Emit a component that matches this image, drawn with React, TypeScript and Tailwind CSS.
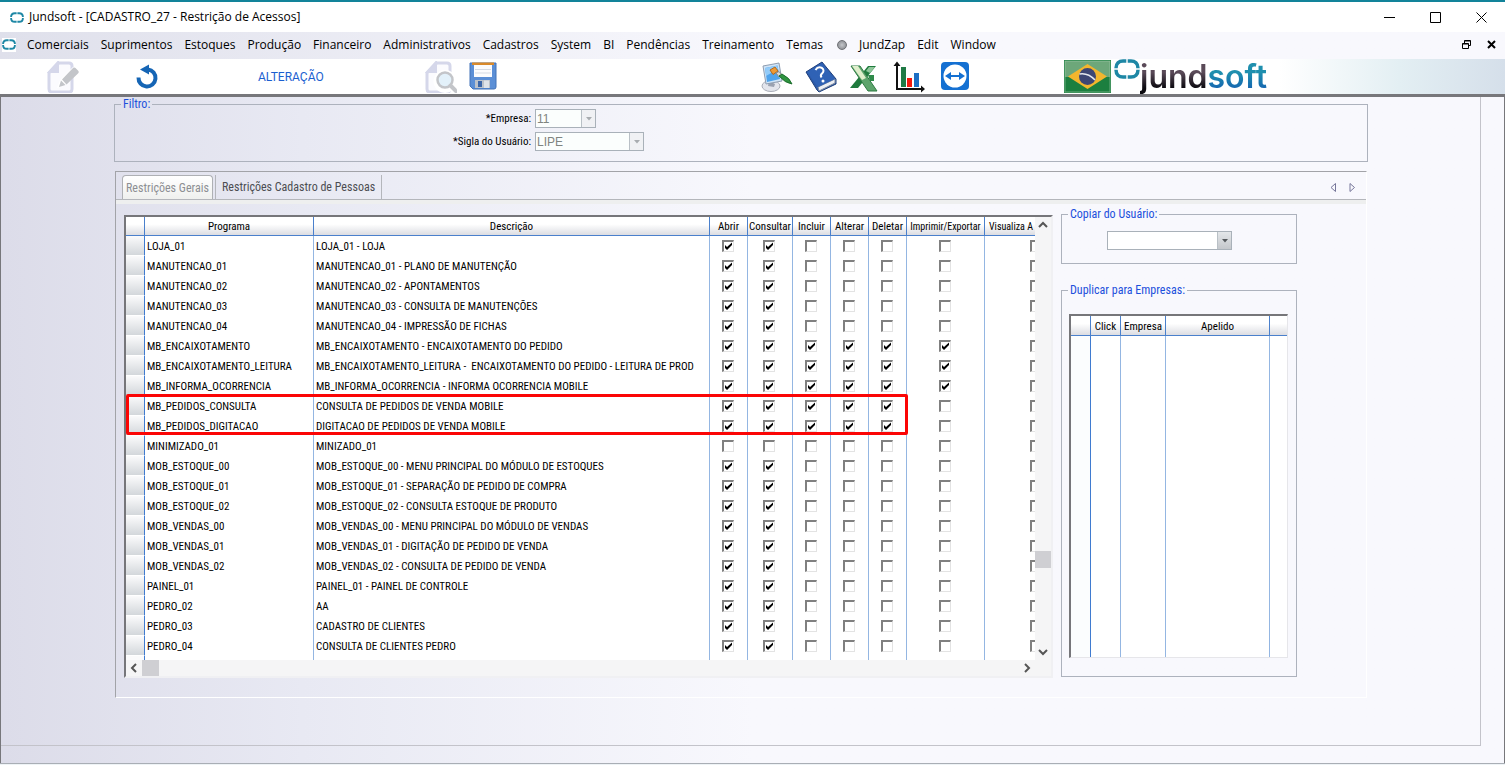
import clsx from 'clsx';
import React from 'react';

interface IProgramRow {
  program: string;
  description: string;
  checked: number;
}

const MENU_ITEMS = [
  'Comerciais', 'Suprimentos', 'Estoques', 'Produção', 'Financeiro', 'Administrativos',
  'Cadastros', 'System', 'BI', 'Pendências', 'Treinamento', 'Temas',
];

const PERMISSIONS = ['Abrir', 'Consultar', 'Incluir', 'Alterar', 'Deletar', 'Imprimir/Exportar', 'Visualiza A'];

// checked = how many permissions are on, counted from the left
const ROWS: IProgramRow[] = [
  { program: 'LOJA_01', description: 'LOJA_01 - LOJA', checked: 2 },
  { program: 'MANUTENCAO_01', description: 'MANUTENCAO_01 - PLANO DE MANUTENÇÃO', checked: 2 },
  { program: 'MANUTENCAO_02', description: 'MANUTENCAO_02 - APONTAMENTOS', checked: 2 },
  { program: 'MANUTENCAO_03', description: 'MANUTENCAO_03 - CONSULTA DE MANUTENÇÕES', checked: 2 },
  { program: 'MANUTENCAO_04', description: 'MANUTENCAO_04 - IMPRESSÃO DE FICHAS', checked: 2 },
  { program: 'MB_ENCAIXOTAMENTO', description: 'MB_ENCAIXOTAMENTO - ENCAIXOTAMENTO DO PEDIDO', checked: 6 },
  { program: 'MB_ENCAIXOTAMENTO_LEITURA', description: 'MB_ENCAIXOTAMENTO_LEITURA -  ENCAIXOTAMENTO DO PEDIDO - LEITURA DE PROD', checked: 6 },
  { program: 'MB_INFORMA_OCORRENCIA', description: 'MB_INFORMA_OCORRENCIA - INFORMA OCORRENCIA MOBILE', checked: 6 },
  { program: 'MB_PEDIDOS_CONSULTA', description: 'CONSULTA DE PEDIDOS DE VENDA MOBILE', checked: 5 },
  { program: 'MB_PEDIDOS_DIGITACAO', description: 'DIGITACAO DE PEDIDOS DE VENDA MOBILE', checked: 5 },
  { program: 'MINIMIZADO_01', description: 'MINIZADO_01', checked: 0 },
  { program: 'MOB_ESTOQUE_00', description: 'MOB_ESTOQUE_00 - MENU PRINCIPAL DO MÓDULO DE ESTOQUES', checked: 2 },
  { program: 'MOB_ESTOQUE_01', description: 'MOB_ESTOQUE_01 - SEPARAÇÃO DE PEDIDO DE COMPRA', checked: 2 },
  { program: 'MOB_ESTOQUE_02', description: 'MOB_ESTOQUE_02 - CONSULTA ESTOQUE DE PRODUTO', checked: 2 },
  { program: 'MOB_VENDAS_00', description: 'MOB_VENDAS_00 - MENU PRINCIPAL DO MÓDULO DE VENDAS', checked: 2 },
  { program: 'MOB_VENDAS_01', description: 'MOB_VENDAS_01 - DIGITAÇÃO DE PEDIDO DE VENDA', checked: 2 },
  { program: 'MOB_VENDAS_02', description: 'MOB_VENDAS_02 - CONSULTA DE PEDIDO DE VENDA', checked: 2 },
  { program: 'PAINEL_01', description: 'PAINEL_01 - PAINEL DE CONTROLE', checked: 2 },
  { program: 'PEDRO_02', description: 'AA', checked: 2 },
  { program: 'PEDRO_03', description: 'CADASTRO DE CLIENTES', checked: 2 },
  { program: 'PEDRO_04', description: 'CONSULTA DE CLIENTES PEDRO', checked: 2 },
];

function BrandMark({ className }: { className?: string }) {
  return (
    <svg viewBox="0 0 26 20" className={className} fill="none" stroke="#1e87a5" strokeWidth="3.500" aria-hidden="true">
      <path d="M12.300 2H9C5 2 2 4.500 2 9.300M13.700 2H17C21 2 24 4.500 24 9.300M2 10.700C2 15.500 5 18 9 18H12.300M24 10.700C24 15.500 21 18 17 18H13.700" />
    </svg>
  );
}

function PageOutline({ children }: { children: React.ReactNode }) {
  return (
    <svg viewBox="0 0 32 32" className="size-8" fill="none" aria-hidden="true">
      <path d="M12 2H22Q25 2 25 5V28Q25 31 22 31H5Q2 31 2 28V12Z" fill="#fbfbfe" stroke="#d5d7ea" strokeWidth="3" />
      <path d="M2 11L11 1V11Z" fill="#d5d7ea" stroke="#d5d7ea" strokeWidth="2" />
      {children}
    </svg>
  );
}

function EditIcon() {
  return (
    <PageOutline>
      <path d="M10 27L13 19L26 6L32 11L18 24Z" fill="#fff" />
      <path d="M12 26L14 19.500L18.500 24Z M15 18.500L25.500 7.500Q27 6 28.500 7L31 9.500Q32.500 11 31 12.500L19.500 23.500Z" fill="#c3c5c9" />
    </PageOutline>
  );
}

function SearchPageIcon() {
  return (
    <PageOutline>
      <path d="M20 12a8.500 8.500 0 1 0 .1 0ZM25 24L31 30" fill="#fff" stroke="#fff" strokeWidth="6" />
      <circle cx="20" cy="19" r="7.500" fill="#e3f1fa" stroke="#c3c5c9" strokeWidth="2.500" />
      <path d="M25.500 24.500L31 30" stroke="#c3c5c9" strokeWidth="4" strokeLinecap="round" />
    </PageOutline>
  );
}

function UndoIcon() {
  return (
    <svg viewBox="0 0 28 32" className="h-8 w-7" aria-hidden="true">
      <path d="M5.500 16.500A8.500 8.500 0 1 0 15 8.500" fill="none" stroke="#1565b5" strokeWidth="4" />
      <path d="M7 8.500L16 3.500V13.500Z" fill="#1565b5" />
    </svg>
  );
}

function SaveIcon() {
  return (
    <svg viewBox="0 0 28 32" className="h-8 w-7" aria-hidden="true">
      <path d="M1 2H27V26Q27 28 25 28H4L1 25Z" fill="#5b8fd6" stroke="#4272b8" />
      <path d="M5 3H23V16H5Z" fill="#fbfcfe" />
      <path d="M3 1.500H25V4H3Z" fill="#d98a2b" />
      <path d="M6 8.500H22M6 12H22" stroke="#d5dbe4" />
      <path d="M6 19H21V27H6Z" fill="#bcc2ca" />
      <path d="M9 20H13V26H9Z" fill="#3b66a8" />
      <path d="M15 19.500H20V27H15Z" fill="#dfe3e8" />
    </svg>
  );
}

function PaintIcon() {
  return (
    <svg viewBox="0 0 32 32" className="size-8" aria-hidden="true">
      <ellipse cx="10" cy="25" rx="9" ry="5.500" fill="#e3e5ec" stroke="#a9adb8" />
      <path d="M8 20L14 23L13 26L7 25Z" fill="#9aa1b0" />
      <path d="M2 5L18 2L21 20L5 23Z" fill="#cfe4f7" stroke="#8f9db0" />
      <path d="M4 7L16.500 4.500L19 18L6 21Z" fill="#4fa3ec" />
      <path d="M4 7L16.500 4.500L17 8L5 15Z" fill="#93cbf8" />
      <path d="M9 9L14 6L17 10L12 13.500Z" fill="#ee9a35" stroke="#b36a1c" />
      <path d="M15 12L18 10.500L21 14L18 16Z" fill="#d9d9d9" stroke="#8a8a8a" />
      <path d="M18 15L21 13Q29 17 31 23Q24 22 18 15Z" fill="#2f9440" stroke="#1d6e2d" />
    </svg>
  );
}

function HelpBookIcon() {
  return (
    <svg viewBox="0 0 32 32" className="size-8" aria-hidden="true">
      <path d="M1 11L17 1L31 18L31 23L14 31L12 29Z" fill="#2c5aa8" stroke="#1e3f7c" />
      <path d="M13 26L30 18V22L14 30Z" fill="#edf0f5" stroke="#7f8ba0" />
      <path d="M2 11L17 2L30 18L13 26Z" fill="#2f62b5" />
      <path d="M10.500 9Q13 5 17 7Q20 9.500 17 12.500Q15 14 16.500 16.500" fill="none" stroke="#fff" strokeWidth="2" />
      <circle cx="18" cy="20" r="1.500" fill="#fff" />
    </svg>
  );
}

function SpreadsheetIcon() {
  return (
    <svg viewBox="0 0 32 32" className="size-8" aria-hidden="true">
      <path d="M19 5H27L9 27H1Z" fill="#1f7a3d" />
      <path d="M20 6H26L21 12L17 10Z" fill="#8fc79a" />
      <path d="M19 14H25V20H21Z" fill="#2f8a4a" />
      <path d="M2 5H11L28 30H19Z" fill="#5da46c" stroke="#2d7a42" />
      <path d="M3 5H9L17 17L13 19Z" fill="#dfeecb" />
    </svg>
  );
}

function ChartIcon() {
  return (
    <svg viewBox="0 0 32 32" className="size-8" aria-hidden="true">
      <path d="M4 3V28H30" fill="none" stroke="#111" strokeWidth="2" />
      <path d="M0.500 5L4 0.500L7.500 5ZM28 24.500L32 28L28 31.500Z" fill="#111" />
      <path d="M8 6H13V26H8Z" fill="#1f7a45" />
      <path d="M14 17H19V26H14Z" fill="#f3190d" />
      <path d="M21 12H26V26H21Z" fill="#1c6fc4" />
    </svg>
  );
}

function RemoteIcon() {
  return (
    <svg viewBox="0 0 32 32" className="size-8" aria-hidden="true">
      <rect x="4" y="1" width="28" height="28" rx="4" fill="#1470d2" />
      <circle cx="18" cy="15" r="11.500" fill="#fff" />
      <path d="M8 15L14 11V14H22V11L28 15L22 19V16H14V19Z" fill="#1470d2" />
    </svg>
  );
}

function FlagIcon() {
  return (
    <svg viewBox="0 0 47 33" className="h-[33px] w-[47px]" aria-hidden="true">
      <rect width="47" height="33" fill="#1c7f3f" />
      <rect x="1" y="1" width="45" height="16" fill="#6da77a" />
      <rect x="1" y="1" width="45" height="31" fill="none" stroke="#b6d3bb" strokeOpacity="0.500" />
      <path d="M4 16.500L23.500 4L43 16.500L23.500 29Z" fill="#f2b62e" />
      <circle cx="23.500" cy="16.500" r="8.500" fill="#3d4674" />
      <path d="M15.500 14Q24 12.500 31 20" fill="none" stroke="#e5e8ef" strokeWidth="1.500" />
    </svg>
  );
}

function ToolButton({ label, children }: { label: string; children: React.ReactNode }) {
  return (
    <button type="button" aria-label={label} className="shrink-0">
      {children}
    </button>
  );
}

function CheckCell({ label, on }: { label: string; on: boolean }) {
  return (
    <span className="mx-auto grid size-3 place-items-center">
      <input
        type="checkbox"
        aria-label={label}
        defaultChecked={on}
        className="col-start-1 row-start-1 size-3 appearance-none border-t-2 border-r border-b border-l-2 border-t-[#808080] border-r-[#e3e3e3] border-b-[#e3e3e3] border-l-[#808080] bg-white"
      />
      {on && (
        <svg viewBox="0 0 12 12" className="pointer-events-none col-start-1 row-start-1 size-3" aria-hidden="true">
          <path d="M3 5V8L5 10L10 5V2.500L5 7Z" fill="#000" />
        </svg>
      )}
    </span>
  );
}

function SelectBox({ label, value, className, disabled }: { label: string; value?: string; className?: string; disabled?: boolean }) {
  return (
    <span className={clsx('grid h-[19px] border border-[#a9b1b9]', disabled ? 'bg-[#fbfefd]' : 'bg-white', className)}>
      <select
        id={label}
        aria-label={label}
        disabled={disabled}
        className="col-start-1 row-start-1 h-[17px] w-full appearance-none px-px font-['Liberation_Sans'] text-xs leading-4 text-[#7f8480] opacity-100"
      >
        <option>{value ?? ''}</option>
      </select>
      <span
        className={clsx(
          'pointer-events-none col-start-1 row-start-1 flex h-[17px] w-3.5 items-center justify-center justify-self-end border-l border-[#b9c0c6]',
          disabled ? 'bg-[#f0f1f4] text-[#a8acb0]' : 'bg-linear-to-b from-[#e4e7ea] to-[#c4c7cb] text-[#55595d]',
        )}
      >
        <svg viewBox="0 0 6 4" className="h-1 w-1.5" aria-hidden="true"><path d="M0 0H6L3 3.500Z" fill="currentColor" /></svg>
      </span>
    </span>
  );
}

function Chevron({ d, label }: { d: string; label: string }) {
  return (
    <button type="button" aria-label={label} className="flex size-4 items-center justify-center">
      <svg viewBox="0 0 10 10" className="size-2.5" fill="none" stroke="#555" strokeWidth="2" aria-hidden="true"><path d={d} /></svg>
    </button>
  );
}

function Group({ title, className, children }: { title: string; className?: string; children: React.ReactNode }) {
  return (
    <fieldset className={clsx('min-w-0 border border-[#adb2bd]', className)}>
      <legend className="ml-1.5 px-0.5 text-xs leading-[10px] text-[#1c50dc]">{title}</legend>
      {children}
    </fieldset>
  );
}

const headCell = 'border-r border-b border-[#4a80cc] bg-linear-to-b from-white from-40% to-[#dcdde2] p-0 pt-0.5 text-center font-normal whitespace-nowrap';

function PermissionsGrid() {
  return (
    <div className="mt-1.5 min-w-0 flex-1 border-2 border-t-[#76767a] border-r-[#f0f0f3] border-b-[#f0f0f3] border-l-[#76767a] bg-white">
      <div className="flex">
        <div className="relative h-[443px] min-w-0 flex-1 overflow-hidden">
          <table className="w-[963px] table-fixed border-separate border-spacing-0 text-[11px] leading-[14px]">
            <colgroup>
              <col className="w-[19px]" />
              <col className="w-[169px]" />
              <col className="w-[396px]" />
              <col className="w-[38px]" />
              <col className="w-[45px]" />
              <col className="w-[38px]" />
              <col className="w-[38px]" />
              <col className="w-[38px]" />
              <col className="w-[78px]" />
              <col className="w-[104px]" />
            </colgroup>
            <thead>
              <tr className="h-[19px]">
                <th className={headCell} aria-label="Linha" />
                <th className={headCell}>Programa</th>
                <th className={headCell}>Descrição</th>
                {PERMISSIONS.map((p, i) => (
                  <th key={p} className={clsx(headCell, i >= 5 && 'text-[10px]', i === 6 && 'pl-1 text-left')}>{p}</th>
                ))}
              </tr>
            </thead>
            <tbody>
              {ROWS.map((row) => (
                <tr key={row.program} className="h-5">
                  <td className="border-r border-b border-r-[#3f7bd0] border-b-white bg-linear-to-b from-[#fbfbfc] to-[#d3d7db] p-0" />
                  <td className="truncate border-r border-[#94b6e2] p-0 pt-0.5 pl-0.5">{row.program}</td>
                  <td className="overflow-hidden border-r border-[#94b6e2] p-0 pt-0.5 pl-0.5 whitespace-pre">{row.description}</td>
                  {PERMISSIONS.map((p, i) => (
                    <td key={p} className="border-r border-[#94b6e2] p-0 pr-0.5">
                      <CheckCell label={`${p} ${row.program}`} on={i < row.checked} />
                    </td>
                  ))}
                </tr>
              ))}
              <tr className="h-5">
                <td className="border-r border-[#3f7bd0] bg-[#fbfbfc] p-0" />
                <td className="border-r border-[#94b6e2] p-0" />
                <td className="border-r border-[#94b6e2] p-0" />
                {PERMISSIONS.map((p) => <td key={p} className="border-r border-[#94b6e2] p-0" />)}
              </tr>
            </tbody>
          </table>
          <div className="pointer-events-none absolute top-[177px] left-0 h-[41px] w-[782px] rounded-xs border-3 border-[#fb0505]" />
        </div>
        <div className="flex w-4 flex-col items-center justify-between bg-[#f5f5f6]">
          <Chevron d="M1 7L5 3L9 7" label="Rolar para cima" />
          <div className="flex flex-1 flex-col justify-end pb-[76px]">
            <div className="h-[17px] w-4 bg-[#cfcfd3]" />
          </div>
          <Chevron d="M1 3L5 7L9 3" label="Rolar para baixo" />
        </div>
      </div>
      <div className="flex h-4 items-center bg-[#f5f5f6] pr-4">
        <Chevron d="M7 1L3 5L7 9" label="Rolar para esquerda" />
        <div className="h-4 w-[17px] bg-[#cfcfd3]" />
        <div className="flex-1" />
        <Chevron d="M3 1L7 5L3 9" label="Rolar para direita" />
      </div>
    </div>
  );
}

function CompaniesGrid() {
  const cell = 'border-r border-[#94b6e2] p-0';
  return (
    <div className="border-t-2 border-r border-b border-l-2 border-t-[#76767a] border-r-[#e6e6ea] border-b-[#e6e6ea] border-l-[#76767a] bg-white">
      <table className="w-full table-fixed border-separate border-spacing-0 text-[11px] leading-[14px]">
        <colgroup>
          <col className="w-5" />
          <col className="w-[30px]" />
          <col className="w-[45px]" />
          <col className="w-[104px]" />
          <col />
        </colgroup>
        <thead>
          <tr className="h-5">
            <th className={headCell} aria-label="Linha" />
            <th className={headCell}>Click</th>
            <th className={headCell}>Empresa</th>
            <th className={headCell}>Apelido</th>
            <th className={clsx(headCell, 'border-r-0')} aria-label="Extra" />
          </tr>
        </thead>
        <tbody>
          <tr className="h-[321px]">
            <td className="border-r border-[#3f7bd0] bg-[#fbfdfe] p-0" />
            <td className={cell} />
            <td className={cell} />
            <td className={cell} />
            <td className="p-0" />
          </tr>
        </tbody>
      </table>
    </div>
  );
}

export default function App() {
  return (
    <div className="flex min-h-screen flex-col bg-white font-['Roboto_Condensed','Liberation_Sans',sans-serif] text-black">
      <div className="h-0.5 bg-[#12839a]" />

      <header className="font-['Open_Sans','Noto_Sans',sans-serif] text-xs">
        <div className="flex h-[30px] items-center pl-2.5">
          <BrandMark className="h-[11px] w-3.5" />
          <h1 className="ml-[5px] flex-1">Jundsoft - [CADASTRO_27 - Restrição de Acessos]</h1>
          <div className="flex gap-8 pr-[17px]">
            <button type="button" aria-label="Minimizar" className="flex size-3.5 items-center justify-center">
              <svg viewBox="0 0 11 11" className="size-[11px]" stroke="#000"><path d="M0 5.500H11" /></svg>
            </button>
            <button type="button" aria-label="Maximizar" className="flex size-3.5 items-center justify-center">
              <svg viewBox="0 0 11 11" className="size-[11px]" fill="none" stroke="#000"><path d="M0.500 0.500H10.500V10.500H0.500Z" /></svg>
            </button>
            <button type="button" aria-label="Fechar" className="flex size-3.5 items-center justify-center">
              <svg viewBox="0 0 11 11" className="size-[11px]" stroke="#000"><path d="M0.500 0.500L10.500 10.500M10.500 0.500L0.500 10.500" /></svg>
            </button>
          </div>
        </div>

        <div className="flex h-[27px] items-center bg-linear-to-r from-[#dfe0eb] to-[#f8f8fd] to-50% pb-0.5 pl-0.5">
          <span className="flex size-3.5 items-center bg-white"><BrandMark className="h-[11px] w-3.5" /></span>
          <nav className="ml-[11px] flex items-center gap-3">
            {MENU_ITEMS.map((item) => <button key={item} type="button">{item}</button>)}
            <button type="button" className="flex items-center gap-3 pl-0.5">
              <span className="size-2.5 rounded-full border border-[#6f7175] bg-radial from-[#c5c7cb] to-[#808388]" />
              JundZap
            </button>
            <button type="button">Edit</button>
            <button type="button">Window</button>
          </nav>
          <div className="ml-auto flex items-center gap-4 pr-[9px]">
            <button type="button" aria-label="Restaurar janela">
              <svg viewBox="0 0 9 9" className="size-[9px]" fill="none" stroke="#000"><path d="M2.500 3V0.500H8.500V5.500H6.500M2.500 1H8.500M0.500 3.500H6.500V8.500H0.500ZM0.500 4H6.500" /></svg>
            </button>
            <button type="button" aria-label="Fechar janela">
              <svg viewBox="0 0 9 9" className="size-[9px]" stroke="#000" strokeWidth="2"><path d="M1 1L8 8M8 1L1 8" /></svg>
            </button>
          </div>
        </div>
      </header>

      <div className="flex h-[35px] items-center bg-linear-to-r from-white from-85% via-[#e3eff3] via-93% to-[#d5dfea]">
        <div className="flex w-[258px] items-center gap-[54px] pl-[47px]">
          <ToolButton label="Editar"><EditIcon /></ToolButton>
          <ToolButton label="Desfazer"><UndoIcon /></ToolButton>
        </div>
        <p className="w-[167px] font-['Roboto'] text-xs text-[#1c5fd0]">ALTERAÇÃO</p>
        <div className="flex w-[336px] items-center gap-3">
          <ToolButton label="Pesquisar"><SearchPageIcon /></ToolButton>
          <ToolButton label="Salvar"><SaveIcon /></ToolButton>
        </div>
        <div className="flex w-[303px] items-center gap-3">
          <ToolButton label="Aparência"><PaintIcon /></ToolButton>
          <ToolButton label="Ajuda"><HelpBookIcon /></ToolButton>
          <ToolButton label="Exportar planilha"><SpreadsheetIcon /></ToolButton>
          <ToolButton label="Gráficos"><ChartIcon /></ToolButton>
          <ToolButton label="Acesso remoto"><RemoteIcon /></ToolButton>
        </div>
        <FlagIcon />
        <BrandMark className="ml-[3px] h-5 w-[26px] self-start" />
        <p className="font-['Inter'] text-[32px] leading-8 font-semibold">
          <span className="bg-linear-to-b from-[#5a4a58] from-40% to-[#0c0a10] to-80% bg-clip-text text-transparent">jund</span>
          <span className="bg-linear-to-b from-[#1f8fae] from-40% to-[#1767b0] to-80% bg-clip-text text-transparent">soft</span>
        </p>
      </div>

      <main className="flex-1 border-x border-t-3 border-x-[#77777b] border-t-[#77777b] bg-linear-to-r from-[#dcdce9] via-[#e8e9f3] via-20% to-[#f8f8fd] to-50% pr-[23px] pb-4">
        <div className="border-r border-b border-[#c3c3ca] pt-0.5 pb-[47px]">
          <Group title="Filtro:" className="mr-28 ml-[113px] pb-2.5">
            <div className="grid grid-cols-[416px_auto] items-center justify-start gap-x-1 gap-y-1 text-[11px]">
              <label htmlFor="Empresa" className="text-right leading-4">*Empresa:</label>
              <SelectBox label="Empresa" value="11" disabled className="w-[61px]" />
              <label htmlFor="Sigla do Usuário" className="text-right leading-4">*Sigla do Usuário:</label>
              <SelectBox label="Sigla do Usuário" value="LIPE" disabled className="w-[109px]" />
            </div>
          </Group>

          <section className="mt-[9px] mr-[113px] ml-[114px] border border-t-[#a2a3a8] border-r-white border-b-white border-l-[#a2a3a8] pb-[19px]">
            <div className="flex items-end border-b border-[#b4b6bb] pt-[3px] pl-1.5 text-xs leading-6 text-[#4c4d52]" role="tablist">
              <button type="button" role="tab" aria-selected="true" className="h-6 rounded-t-sm border border-b-0 border-[#aeb0b4] bg-linear-to-b from-white to-[#eff0ee] px-[3px] leading-[22px] text-[#8d8f93]">
                Restrições Gerais
              </button>
              <button type="button" role="tab" aria-selected="false" className="ml-0.5 h-6 border-x border-[#b4b6bb] px-1.5">
                Restrições Cadastro de Pessoas
              </button>
              <div className="ml-auto flex h-6 items-center gap-3 pr-2.5">
                <button type="button" aria-label="Aba anterior">
                  <svg viewBox="0 0 7 9" className="h-[9px] w-[7px]" fill="none" stroke="#77779a"><path d="M5.500 0.500V8.500L1 4.500Z" /></svg>
                </button>
                <button type="button" aria-label="Próxima aba">
                  <svg viewBox="0 0 7 9" className="h-[9px] w-[7px]" fill="none" stroke="#77779a"><path d="M1 0.500V8.500L5.500 4.500Z" /></svg>
                </button>
              </div>
            </div>
            <div className="h-1 bg-[#eeefef]" />
            <div className="flex items-start gap-2 pt-[5px] pr-[69px] pl-2">
              <PermissionsGrid />
              <div className="flex w-[236px] shrink-0 flex-col gap-[21px]">
                <Group title="Copiar do Usuário:" className="pb-[13px]">
                  <SelectBox label="Usuário de origem" className="mt-3 ml-[45px] w-[125px]" />
                </Group>
                <Group title="Duplicar para Empresas:" className="pb-[18px]">
                  <div className="pt-[19px] pr-2 pl-[7px]"><CompaniesGrid /></div>
                </Group>
              </div>
            </div>
          </section>
        </div>
      </main>
      <footer className="h-0.5 border-t border-[#a9aeb5] bg-[#eef3f6]" />
    </div>
  );
}
